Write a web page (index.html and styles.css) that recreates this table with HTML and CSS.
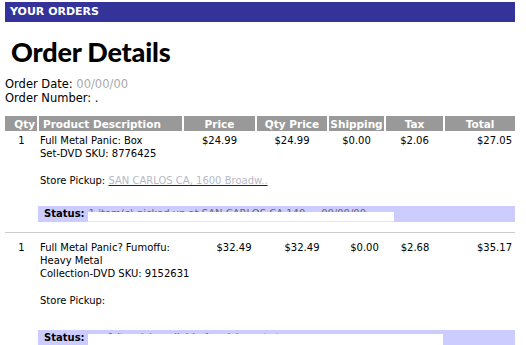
FILE: index.html
```html
<!DOCTYPE html>
<html>
<head>
<meta charset="utf-8">
<link rel="stylesheet" href="styles.css">
</head>
<body>
<div class="page">
  <div class="topbar">YOUR ORDERS</div>
  <h1 class="title">Order Details</h1>
  <div class="meta">
    <div>Order Date: <span class="faded">00/00/00</span></div>
    <div>Order Number: .</div>
  </div>

  <table class="items t1">
    <colgroup>
      <col class="c-qty"><col class="c-desc"><col class="c-price"><col class="c-qprice"><col class="c-ship"><col class="c-tax"><col class="c-total">
    </colgroup>
    <thead>
      <tr>
        <th class="qty">Qty</th>
        <th class="desc">Product Description</th>
        <th>Price</th>
        <th>Qty Price</th>
        <th>Shipping</th>
        <th>Tax</th>
        <th>Total</th>
      </tr>
    </thead>
    <tbody>
      <tr class="item">
        <td class="qty">1</td>
        <td class="desc">
          <div>Full Metal Panic: Box<br>Set-DVD SKU: 8776425</div>
          <div class="pickup">Store Pickup: <span class="link">SAN CARLOS CA, 1600 Broadw..</span></div>
        </td>
        <td class="num">$24.99</td>
        <td class="num">$24.99</td>
        <td class="num">$0.00</td>
        <td class="num">$2.06</td>
        <td class="total">$27.05</td>
      </tr>
      <tr class="status-row">
        <td></td>
        <td colspan="6" class="status"><div class="status-bar"><span class="status-label">Status:</span><span class="status-text s1">1 item(s) picked up at SAN CARLOS CA 140 &nbsp; &nbsp; 00/00/00</span></div></td>
      </tr>
    </tbody>
  </table>

  <div class="rule"></div>

  <table class="items t2">
    <colgroup>
      <col class="c-qty"><col class="c-desc"><col class="c-price"><col class="c-qprice"><col class="c-ship"><col class="c-tax"><col class="c-total">
    </colgroup>
    <tbody>
      <tr class="item">
        <td class="qty">1</td>
        <td class="desc">
          <div>Full Metal Panic? Fumoffu:<br>Heavy Metal<br>Collection-DVD SKU: 9152631</div>
          <div class="pickup p2">Store Pickup:</div>
        </td>
        <td class="num">$32.49</td>
        <td class="num">$32.49</td>
        <td class="num">$0.00</td>
        <td class="num">$2.68</td>
        <td class="total">$35.17</td>
      </tr>
      <tr class="status-row">
        <td></td>
        <td colspan="6" class="status"><div class="status-bar"><span class="status-label">Status:</span><span class="status-text s2">&nbsp; &nbsp; &nbsp; 1 item(s) available for pickup at store &nbsp; &nbsp; &nbsp; &nbsp; &nbsp; &nbsp; &nbsp; &nbsp; .</span></div></td>
      </tr>
    </tbody>
  </table>
</div>
</body>
</html>
```

FILE: styles.css
```css
html, body {
  margin: 0;
  padding: 0;
  background: #fff;
}
body {
  font-family: "DejaVu Sans", Verdana, sans-serif;
  font-size: 10px;
  color: #000;
  overflow: hidden;
}
.page {
  width: 510px;
  padding: 2px 0 0 5px;
}
.topbar {
  height: 20px;
  background: #333399;
  color: #fff;
  font-weight: bold;
  font-size: 11px;
  line-height: 20px;
  padding-left: 5px;
  box-sizing: border-box;
}
.title {
  margin: 15px 0 0 6px;
  font-family: "Lato", "DejaVu Sans", sans-serif;
  font-weight: 900;
  font-size: 27px;
  line-height: 30px;
  letter-spacing: -0.2px;
}
.meta {
  margin-top: 10px;
  font-size: 11.5px;
  line-height: 14px;
}
.faded {
  color: #aaa;
}
.items {
  width: 510px;
  border-collapse: collapse;
  table-layout: fixed;
  margin-top: 11px;
}
.t1 .c-qty { width: 33px; }
.t1 .c-desc { width: 145px; }
.t1 .c-price { width: 73px; }
.t1 .c-qprice { width: 72px; }
.t1 .c-ship { width: 57px; }
.t1 .c-tax { width: 59px; }
.t1 .c-total { width: 71px; }

.t2 { margin-top: 5px; }
.t2 .c-qty { width: 33px; }
.t2 .c-desc { width: 162px; }
.t2 .c-price { width: 68px; }
.t2 .c-qprice { width: 68px; }
.t2 .c-ship { width: 57px; }
.t2 .c-tax { width: 44px; }
.t2 .c-total { width: 78px; }

th {
  background: #999999;
  color: #fff;
  font-weight: bold;
  font-size: 10.5px;
  height: 15px;
  padding: 0 1px;
  text-align: center;
  white-space: nowrap;
}
th + th {
  border-left: 2px solid #fff;
}
th.desc {
  text-align: left;
  padding-left: 4px;
}
th.qty {
  text-align: right;
  padding-right: 2px;
}
td {
  vertical-align: top;
  padding: 3px 2px 0;
  line-height: 13px;
}
td.qty { text-align: center; }
td.desc { padding-left: 2px; }
td.num { text-align: center; }
td.total { text-align: right; padding-right: 3px; }
.pickup {
  margin-top: 14px;
  padding-bottom: 19px;
  white-space: nowrap;
}
.p2 {
  padding-bottom: 23px;
}
.link {
  color: #b8b8c8;
  text-decoration: underline;
  text-decoration-color: #223;
}
.status-row td {
  padding: 0;
}
.status-bar {
  background: #ccccff;
  height: 16px;
  display: flex;
  align-items: flex-end;
  overflow: hidden;
}
.status-label {
  font-weight: bold;
  padding: 0 4px 0 6px;
  line-height: 16px;
}
.status-text {
  position: relative;
  color: #667;
  line-height: 16px;
  white-space: nowrap;
}
.status-text::after {
  content: "";
  position: absolute;
  left: -1px;
  bottom: 0;
  height: 9px;
  background: #fff;
  border-bottom: 1px solid #e4e4ec;
}
.s1::after { width: 306px; }
.s2::after { width: 355px; height: 11px; }
.rule {
  height: 1px;
  background: #cccccc;
  margin-top: 10px;
}
```
